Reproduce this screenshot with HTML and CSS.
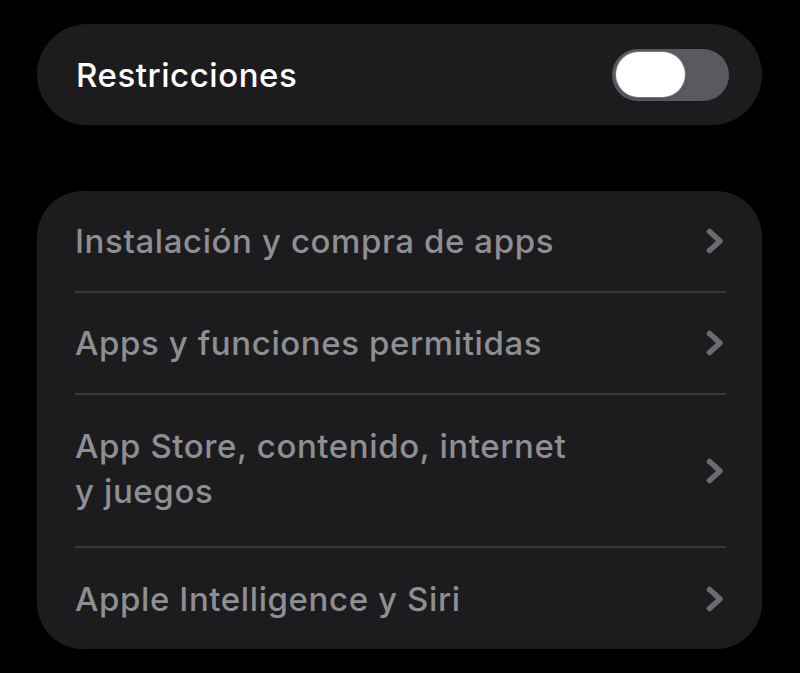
FILE: index.html
```html
<!DOCTYPE html>
<html lang="es">
<head>
<meta charset="utf-8">
<title>Restricciones</title>
<link rel="stylesheet" href="styles.css">
</head>
<body>
<main class="screen">
  <section class="card card-toggle">
    <span class="toggle-label">Restricciones</span>
    <span class="switch" role="switch" aria-checked="false"><span class="knob"></span></span>
  </section>
  <section class="card list">
    <div class="row">
      <span class="row-label">Instalación y compra de apps</span>
      <svg class="chev" viewBox="0 0 18 26" aria-hidden="true"><path d="M3.5 3.5 L14 13 L3.5 22.5"/></svg>
    </div>
    <div class="row">
      <span class="row-label">Apps y funciones permitidas</span>
      <svg class="chev" viewBox="0 0 18 26" aria-hidden="true"><path d="M3.5 3.5 L14 13 L3.5 22.5"/></svg>
    </div>
    <div class="row row-tall">
      <span class="row-label">App Store, contenido, internet<br>y juegos</span>
      <svg class="chev" viewBox="0 0 18 26" aria-hidden="true"><path d="M3.5 3.5 L14 13 L3.5 22.5"/></svg>
    </div>
    <div class="row">
      <span class="row-label">Apple Intelligence y Siri</span>
      <svg class="chev" viewBox="0 0 18 26" aria-hidden="true"><path d="M3.5 3.5 L14 13 L3.5 22.5"/></svg>
    </div>
  </section>
</main>
</body>
</html>
```

FILE: styles.css
```css
html, body {
  margin: 0;
  padding: 0;
  background: #000;
}
body {
  font-family: Inter, "Noto Sans", "Liberation Sans", sans-serif;
  -webkit-font-smoothing: antialiased;
}
.screen {
  width: 800px;
  height: 673px;
  box-sizing: border-box;
  padding: 24px 38px 0 37px;
  display: flex;
  flex-direction: column;
  gap: 66px;
  overflow: hidden;
}
.card {
  background: #1c1c1e;
}
.card-toggle {
  height: 101px;
  border-radius: 51px;
  display: flex;
  align-items: center;
  justify-content: space-between;
  padding: 0 33px 0 39px;
}
.toggle-label {
  color: #fff;
  font-size: 33px;
  font-weight: 500;
  letter-spacing: 0.55px;
}
.switch {
  width: 117px;
  height: 52px;
  border-radius: 26px;
  background: #5a5960;
  display: flex;
  align-items: center;
  padding-left: 4px;
  box-sizing: border-box;
}
.knob {
  width: 69px;
  height: 45px;
  border-radius: 23px;
  background: #fff;
  box-shadow: 0 0 0 1px rgba(150,150,155,0.6), 0 1px 3px rgba(0,0,0,0.3);
}
.list {
  border-radius: 46px;
  padding: 0 36px 0 38px;
  display: flex;
  flex-direction: column;
}
.row {
  display: flex;
  align-items: center;
  justify-content: space-between;
  height: 102px;
  border-bottom: 2px solid #38383a;
  box-sizing: border-box;
}
.row:last-child { border-bottom: none; height: 101px; }
.row-tall { height: 153px; }
.row-label {
  color: #8e8e93;
  font-size: 33px;
  font-weight: 500;
  line-height: 46px;
  letter-spacing: 0.6px;
}
.row-tall .row-label {
  line-height: 45px;
  margin-bottom: 4px;
}
.chev {
  width: 18px;
  height: 26px;
  margin-right: 2px;
  flex: none;
}
.chev path {
  fill: none;
  stroke: #6c6c70;
  stroke-width: 5.5;
  stroke-linecap: round;
  stroke-linejoin: round;
}
```
